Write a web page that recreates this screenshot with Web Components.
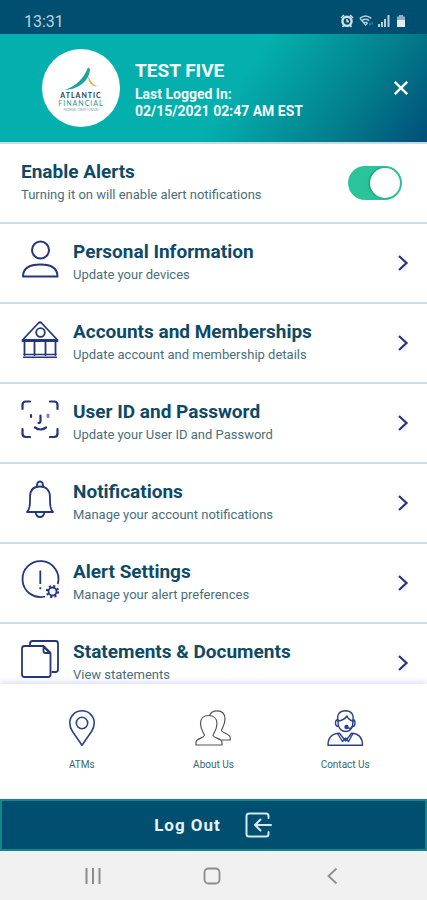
<!DOCTYPE html>
<html lang="en">
<head>
<meta charset="utf-8">
<meta name="viewport" content="width=device-width, initial-scale=1">
<title>Settings</title>
<style>
  body {
    margin: 0;
    font-family: Roboto, "Liberation Sans", sans-serif;
    color: #0d4a68;
    background: #fff;
  }
</style>
</head>
<body>
<settings-page></settings-page>

<script>
const ICONS = {
  person: `<svg viewBox="0 0 38 38" fill="none" stroke="#23367f" stroke-width="2" stroke-linejoin="round">
    <circle cx="19.500" cy="10" r="8.500"/><path d="M2 36.500C2 28 9 24.500 19.500 24.500S36.500 28 36.500 36.500Z"/></svg>`,
  bank: `<svg viewBox="0 0 38 38" fill="none" stroke="#23367f" stroke-width="1.800" stroke-linejoin="round" stroke-linecap="round">
    <path d="M1.500 20 17.500 3Q19 1.500 20.500 3L36.500 20Z"/><circle cx="19.500" cy="12.500" r="4.300"/>
    <path d="M1.500 21.200H36.500M3.500 22v13M13.500 22v13M24.500 22v13M34.500 22v13"/><path d="M3 34.500H35M2.500 37.200H35.500" stroke-width="1.400"/></svg>`,
  face: `<svg viewBox="0 0 38 38" fill="none" stroke="#23367f" stroke-width="2.200" stroke-linecap="round">
    <path d="M1.500 9V5Q1.500 1.500 5 1.500H9M29 1.500H33Q36.500 1.500 36.500 5V9M36.500 29V33.500Q36.500 37 33 37H29M9 37H5Q1.500 37 1.500 33.500V29"/>
    <path d="M10 15v2"/><path d="M27 15v1.500" stroke="#7c84ac" stroke-width="3"/><path d="M19.500 15.500V21Q19.500 23 17.500 23"/><path d="M14 27.500Q19.500 31.500 25 27.500"/></svg>`,
  bell: `<svg viewBox="0 0 38 38" fill="none" stroke="#23367f" stroke-width="1.800" stroke-linejoin="round">
    <path d="M16 7.500Q15.500 1.500 19 1.500T22 7.500"/>
    <path d="M6 32Q9 29 9 22V17C9 10 13 6.500 19 6.500S29 10 29 17V22Q29 29 32 32Z"/><path d="M14.500 32.500Q15.500 37 19 37T23.500 32.500"/></svg>`,
  alert: `<svg viewBox="0 0 38 38" fill="none" stroke="#23367f" stroke-width="1.800">
    <path d="M36.800 24A18 18 0 1 0 24 36.500"/><path d="M19.300 10.500V24M19.300 27.200V29.200"/>
    <circle cx="31.500" cy="31.500" r="4"/><circle cx="31.500" cy="31.500" r="5.600" stroke-width="2" stroke-dasharray="2.200 2.200"/></svg>`,
  docs: `<svg viewBox="0 0 38 38" fill="none" stroke="#23367f" stroke-width="1.800" stroke-linejoin="round">
    <path d="M9 6V3.500Q9 1 11.500 1H34.500Q37 1 37 3.500V29.500Q37 32 34.500 32H30.500"/>
    <path d="M3.500 6H22.500L29.500 13V34.500Q29.500 37 27 37H3.500Q1 37 1 34.500V8.500Q1 6 3.500 6Z"/><path d="M22.500 6.500V11Q22.500 13 24.500 13H29Z"/></svg>`,
  pin: `<svg viewBox="0 0 36 36" fill="none" stroke="#2b4288" stroke-width="1.600" stroke-linejoin="round">
    <path d="M18 35.200 8.500 21.500C6 18 5.800 15.500 5.800 12.800A12.200 12 0 0 1 30.200 12.800C30.200 15.500 30 18 27.500 21.500Z"/><circle cx="18" cy="13" r="5.700"/></svg>`,
  people: `<svg viewBox="0 0 36 36" fill="none" stroke="#555" stroke-width="1.200" stroke-linejoin="round">
    <path d="M1 35V32C1 28.500 9 28 9.500 25.500C9 23 5.500 20 5.500 13.500C5.500 8.500 8.500 5.500 13.500 5.500S22 8.500 22 13.500C22 20 18.500 23 18 25.500C18.500 28 27 28.500 27 32V35Z"/>
    <path d="M14.500 5.500C16 2 18.500.8 22 .8C27 .8 30 4 30 9C30 15 27 18 26.500 20.500C27 23 35.200 24 35.200 27.500V30H26.500"/></svg>`,
  agent: `<svg viewBox="0 0 36 36" fill="none" stroke="#2b4288" stroke-width="1.400" stroke-linejoin="round">
    <path d="M1 35.200C1 27 5 23.500 12.500 23.200L18.500 31 24.500 23.200C32 23.500 35.500 27 35.500 35.200Z"/>
    <path d="M10.500 23.500 15.500 31.500 18.500 28 21.500 31.500 26 23.500"/>
    <path d="M11 10.500C10.500 17 13.500 21.500 18.500 21.500S26 17 26 10.500"/>
    <path d="M11 11C9.500 4 13 .8 18.500 .8S27 4 26 11C23 10.500 21 8.500 20 6C18 9 15 10.500 11 11Z"/>
    <path d="M11.500 9.500Q8.500 9.500 8.500 13T11.500 16.500M25.500 9.500Q28 9.500 28 13T25.500 16.500Q24 19.500 20.500 17.500"/><circle cx="19.500" cy="17" r="1.500" fill="#2b4288"/></svg>`,
  chevron: `<svg viewBox="0 0 12 18" fill="none" stroke="#23367f" stroke-width="2.200"><path d="M2 2 9.500 9 2 16"/></svg>`,
  close: `<svg viewBox="0 0 14 14" fill="none" stroke="#fff" stroke-width="2.400"><path d="M.8.800 13.200 13.200M13.200.800.800 13.200"/></svg>`,
  exit: `<svg viewBox="0 0 28 26" fill="none" stroke="#d5e8ef" stroke-width="2" stroke-linecap="round" stroke-linejoin="round">
    <path d="M23.500 6V4Q23.500 1.500 21 1.500H4Q1.500 1.500 1.500 4V22Q1.500 24.500 4 24.500H21Q23.500 24.500 23.500 22V20"/><path d="M26 13H10.500M15.500 7.500 10 13 15.500 18.500"/></svg>`,
  recents: `<svg viewBox="0 0 16 16" stroke="#8c8c8c" stroke-width="2"><path d="M1.500 0V16M8 0V16M14.500 0V16"/></svg>`,
  home: `<svg viewBox="0 0 16 16" fill="none" stroke="#8c8c8c" stroke-width="1.800"><rect x="0.500" y="0.500" width="15" height="15" rx="4"/></svg>`,
  back: `<svg viewBox="0 0 16 16" fill="none" stroke="#8c8c8c" stroke-width="1.800"><path d="M12.500.500 4.500 8 12.500 15.500"/></svg>`,
  alarm: `<svg viewBox="0 0 14 14" fill="none" stroke="#cfe0e8" stroke-width="2.400"><circle cx="7" cy="7.300" r="4.600"/>
    <path d="M1 4 4 1M10 1 13 4M2.500 13 4 11M11.500 13 10 11M7 5V7.500H9" stroke-width="1.500"/></svg>`,
  wifi: `<svg viewBox="0 0 16 14" fill="none" stroke="#b9d0dc" stroke-width="1.800"><path d="M1 4Q7.500-1.500 14 4M3.500 6.500Q7.500 3.500 11.500 6.500"/>
    <path d="M1 4 7.500 11.500 10 9M5.500 8.500H9.500" stroke-width="1.500"/><path d="M12.500 9V12M15 8V11" stroke-width="1.200" stroke="#5f8ea6"/></svg>`,
  signal: `<svg viewBox="0 0 12 12" fill="#b9d0dc"><path d="M0 9H2V12H0ZM3 7H5V12H3ZM6 4H8V12H6ZM9.500 0H11.500V12H9.500Z"/></svg>`,
  battery: `<svg viewBox="0 0 10 12"><path d="M3 0H7V1.500H9V5H1V1.500H3Z" fill="#8fb0c0"/><path d="M1 5H9V12H1Z" fill="#e3edf1"/></svg>`
};

class AppIcon extends HTMLElement {
  constructor() {
    super();
    this.attachShadow({ mode: 'open' });
  }

  connectedCallback() {
    this.shadowRoot.innerHTML = `
      <style>
        :host { display: block; flex: none; width: 16px; height: 16px; }
        svg { display: block; width: 100%; height: 100%; overflow: visible; }
      </style>
      ${ICONS[this.getAttribute('name')]}
    `;
  }
}
customElements.define('app-icon', AppIcon);

class StatusBar extends HTMLElement {
  constructor() {
    super();
    this.attachShadow({ mode: 'open' });
    this.shadowRoot.innerHTML = `
      <style>
        :host {
          display: flex;
          align-items: center;
          gap: 5px;
          height: 34px;
          box-sizing: border-box;
          padding: 8px 20px 0 24px;
          background: #014f70;
          color: #bcd3de;
          font-size: 16px;
        }
        time { margin-right: auto; }
        app-icon { width: 14px; height: 14px; }
        .small { width: 12px; height: 12px; }
      </style>
      <time>13:31</time>
      <app-icon name="alarm"></app-icon>
      <app-icon name="wifi"></app-icon>
      <app-icon class="small" name="signal"></app-icon>
      <app-icon class="small" name="battery"></app-icon>
    `;
  }
}
customElements.define('status-bar', StatusBar);

class BrandLogo extends HTMLElement {
  constructor() {
    super();
    this.attachShadow({ mode: 'open' });
    this.shadowRoot.innerHTML = `
      <style>
        :host { display: block; flex: none; width: 78px; height: 78px; border-radius: 50%; background: #fff; }
        svg { display: block; width: 100%; height: 100%; }
      </style>
      <svg viewBox="0 0 78 78" font-family="Lato, sans-serif" text-anchor="middle">
        <path d="M23 41C34 37 42 29 46 18.500L48 20C47.500 31 38 40 23 41Z" fill="#1ba3a2"/>
        <path d="M46.500 27C48 32 51 35.500 55.500 37.500C49.500 37.500 45.500 33 46.500 27Z" fill="#e9ad45"/>
        <text x="39" y="49" font-size="7" font-weight="700" letter-spacing="1" fill="#173f56">ATLANTIC</text>
        <text x="39" y="57" font-size="7" letter-spacing="1" fill="#1b9c9b">FINANCIAL</text>
        <text x="39" y="62" font-size="3" fill="#83a0a8">FEDERAL CREDIT UNION</text>
      </svg>
    `;
  }
}
customElements.define('brand-logo', BrandLogo);

class ProfileHeader extends HTMLElement {
  constructor() {
    super();
    this.attachShadow({ mode: 'open' });
    this.shadowRoot.innerHTML = `
      <style>
        :host {
          display: flex;
          align-items: center;
          gap: 15px;
          height: 110px;
          box-sizing: border-box;
          padding: 0 19px 0 42px;
          border-bottom: 2px solid #c8dbe0;
          background: linear-gradient(125deg, #04b0ae 54%, #027f8c 80%, #01517a 99%);
          color: #f2fcfc;
        }
        .text { flex: 1; padding-top: 2px; }
        h1 { margin: 0 0 3px; font-size: 19px; line-height: 24px; font-weight: 700; }
        p { margin: 0; font-size: 14px; line-height: 17px; font-weight: 700; }
        button { padding: 0; border: 0; background: none; cursor: pointer; }
        app-icon { width: 14px; height: 14px; }
      </style>
      <brand-logo></brand-logo>
      <div class="text">
        <h1><slot name="name"></slot></h1>
        <p>Last Logged In:</p>
        <p><slot name="time"></slot></p>
      </div>
      <button aria-label="Close"><app-icon name="close"></app-icon></button>
    `;
  }
}
customElements.define('profile-header', ProfileHeader);

const ROW_STYLE = `
  .row {
    display: flex;
    align-items: flex-start;
    gap: 14px;
    padding: 16px 18px 17px 21px;
    border-bottom: 2px solid #cddde4;
    color: inherit;
    text-decoration: none;
  }
  .text { flex: 1; }
  .title { display: block; font-size: 19px; line-height: 24px; font-weight: 700; color: #0d4a68; }
  .note { display: block; font-size: 13px; line-height: 21px; color: #486f7b; }
`;

class AlertToggle extends HTMLElement {
  constructor() {
    super();
    this.attachShadow({ mode: 'open' });
    this.shadowRoot.innerHTML = `
      <style>
        :host { display: block; }
        ${ROW_STYLE}
        .row { padding-right: 25px; }
        input {
          appearance: none;
          display: flex;
          align-self: center;
          width: 54px;
          height: 34px;
          margin: 0;
          padding: 2px;
          border-radius: 17px;
          background: #b4c3c9;
          cursor: pointer;
        }
        input::before {
          content: "";
          width: 30px;
          height: 30px;
          border-radius: 50%;
          background: #fff;
          box-shadow: -1px 0 2px rgba(0, 80, 80, .5);
        }
        input:checked { justify-content: flex-end; background: #2bc49a; }
      </style>
      <div class="row">
        <label class="text" for="toggle">
          <span class="title"><slot name="title"></slot></span>
          <span class="note"><slot name="note"></slot></span>
        </label>
        <input type="checkbox" id="toggle" checked>
      </div>
    `;
  }
}
customElements.define('alert-toggle', AlertToggle);

class SettingsItem extends HTMLElement {
  constructor() {
    super();
    this.attachShadow({ mode: 'open' });
  }

  connectedCallback() {
    this.shadowRoot.innerHTML = `
      <style>
        :host { display: block; }
        ${ROW_STYLE}
        .icon { width: 38px; height: 38px; }
        .arrow { width: 12px; height: 18px; align-self: center; }
      </style>
      <a class="row" href="#">
        <app-icon class="icon" name="${this.getAttribute('icon')}"></app-icon>
        <span class="text">
          <span class="title"><slot name="title"></slot></span>
          <span class="note"><slot name="note"></slot></span>
        </span>
        <app-icon class="arrow" name="chevron"></app-icon>
      </a>
    `;
  }
}
customElements.define('settings-item', SettingsItem);

class QuickLink extends HTMLElement {
  constructor() {
    super();
    this.attachShadow({ mode: 'open' });
  }

  connectedCallback() {
    this.shadowRoot.innerHTML = `
      <style>
        :host { display: block; }
        a {
          display: flex;
          flex-direction: column;
          align-items: center;
          gap: 11px;
          color: #35686f;
          font-size: 10px;
          line-height: 16px;
          text-decoration: none;
        }
        app-icon { width: 36px; height: 36px; }
      </style>
      <a href="#">
        <app-icon name="${this.getAttribute('icon')}"></app-icon>
        <slot></slot>
      </a>
    `;
  }
}
customElements.define('quick-link', QuickLink);

class LogoutButton extends HTMLElement {
  constructor() {
    super();
    this.attachShadow({ mode: 'open' });
    this.shadowRoot.innerHTML = `
      <style>
        :host { display: block; }
        button {
          display: flex;
          align-items: center;
          justify-content: center;
          gap: 24px;
          width: 100%;
          height: 52px;
          border: 2px solid #12868b;
          background: #014f70;
          color: #e8f3f7;
          font: 700 17px Roboto, "Liberation Sans", sans-serif;
          letter-spacing: 1px;
          cursor: pointer;
        }
        app-icon { width: 28px; height: 26px; }
      </style>
      <button><slot></slot><app-icon name="exit"></app-icon></button>
    `;
  }
}
customElements.define('logout-button', LogoutButton);

class SystemNav extends HTMLElement {
  constructor() {
    super();
    this.attachShadow({ mode: 'open' });
    this.shadowRoot.innerHTML = `
      <style>
        :host {
          display: grid;
          grid-template-columns: repeat(3, 1fr);
          justify-items: center;
          align-items: center;
          height: 49px;
          padding: 0 35px 0 33px;
          background: #f1f1f1;
        }
        button { padding: 0; border: 0; background: none; }
      </style>
      <button aria-label="Recent apps"><app-icon name="recents"></app-icon></button>
      <button aria-label="Home"><app-icon name="home"></app-icon></button>
      <button aria-label="Back"><app-icon name="back"></app-icon></button>
    `;
  }
}
customElements.define('system-nav', SystemNav);

class SettingsPage extends HTMLElement {
  constructor() {
    super();
    this.attachShadow({ mode: 'open' });
    this.shadowRoot.innerHTML = `
      <style>
        :host { display: flex; flex-direction: column; height: 100vh; }
        main { flex: 1; min-height: 0; overflow-y: auto; scrollbar-width: none; }
        nav {
          display: grid;
          grid-template-columns: repeat(3, 1fr);
          padding: 26px 16px;
          background: #fff;
          box-shadow: 0 -2px 6px rgba(70, 80, 170, .2);
          z-index: 1;
        }
        logout-button, system-nav { z-index: 1; }
      </style>
      <status-bar></status-bar>
      <profile-header>
        <span slot="name">TEST FIVE</span>
        <span slot="time">02/15/2021 02:47 AM EST</span>
      </profile-header>
      <main>
        <alert-toggle>
          <span slot="title">Enable Alerts</span>
          <span slot="note">Turning it on will enable alert notifications</span>
        </alert-toggle>
        <settings-item icon="person">
          <span slot="title">Personal Information</span>
          <span slot="note">Update your devices</span>
        </settings-item>
        <settings-item icon="bank">
          <span slot="title">Accounts and Memberships</span>
          <span slot="note">Update account and membership details</span>
        </settings-item>
        <settings-item icon="face">
          <span slot="title">User ID and Password</span>
          <span slot="note">Update your User ID and Password</span>
        </settings-item>
        <settings-item icon="bell">
          <span slot="title">Notifications</span>
          <span slot="note">Manage your account notifications</span>
        </settings-item>
        <settings-item icon="alert">
          <span slot="title">Alert Settings</span>
          <span slot="note">Manage your alert preferences</span>
        </settings-item>
        <settings-item icon="docs">
          <span slot="title">Statements &amp; Documents</span>
          <span slot="note">View statements</span>
        </settings-item>
      </main>
      <nav>
        <quick-link icon="pin">ATMs</quick-link>
        <quick-link icon="people">About Us</quick-link>
        <quick-link icon="agent">Contact Us</quick-link>
      </nav>
      <logout-button>Log Out</logout-button>
      <system-nav></system-nav>
    `;
  }
}
customElements.define('settings-page', SettingsPage);
</script>
</body>
</html>
